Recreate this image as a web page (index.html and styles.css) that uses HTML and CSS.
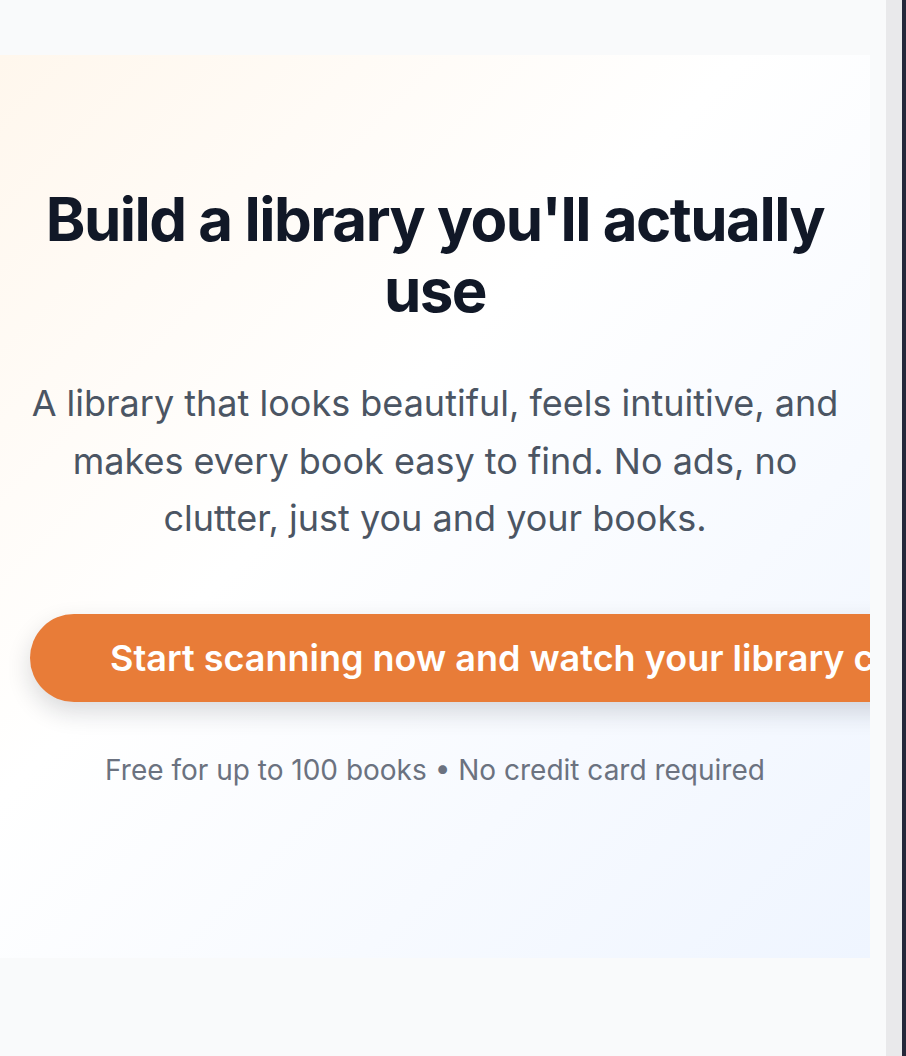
FILE: index.html
```html
<!DOCTYPE html>
<html lang="en">
<head>
<meta charset="utf-8">
<title>Build a library you'll actually use</title>
<link rel="stylesheet" href="styles.css">
</head>
<body>
<div class="window">
  <main class="page">
    <section class="hero">
      <h1 class="hero-title">Build a library you'll actually use</h1>
      <p class="hero-text">A library that looks beautiful, feels intuitive, and makes every book easy to find. No ads, no clutter, just you and your books.</p>
      <div class="hero-cta">
        <a class="cta-button" href="#">Start scanning now and watch your library come to life</a>
      </div>
      <p class="hero-note">Free for up to 100 books • No credit card required</p>
    </section>
  </main>
  <div class="scroll-track"></div>
  <div class="window-edge"></div>
</div>
</body>
</html>
```

FILE: styles.css
```css
* { box-sizing: border-box; }
html, body { margin: 0; padding: 0; height: 100%; }
body {
  font-family: Inter, "Noto Sans", sans-serif;
  background: #f9fafb;
  overflow: hidden;
}
.window {
  display: flex;
  height: 1056px;
}
.page {
  flex: 1;
  min-width: 0;
  background: #f9fafb;
  padding: 55px 16px 0 0;
}
.hero {
  height: 903px;
  overflow: hidden;
  background: linear-gradient(135deg, #fff7ed 0%, #ffffff 42%, #eff5ff 100%);
  padding: 129px 30px 0;
  text-align: center;
}
.hero-title {
  margin: 0;
  font-size: 60px;
  line-height: 71px;
  font-weight: 700;
  letter-spacing: -0.025em;
  color: #111827;
}
.hero-text {
  margin: 49px 0 0;
  font-size: 36px;
  line-height: 57.5px;
  color: #4b5563;
}
.hero-cta {
  margin-top: 66px;
  white-space: nowrap;
  text-align: left;
}
.cta-button {
  display: inline-block;
  height: 88px;
  line-height: 88px;
  padding: 0 80px;
  border-radius: 44px;
  background: #e87c38;
  color: #ffffff;
  font-size: 36px;
  font-weight: 600;
  text-decoration: none;
  box-shadow: 0 10px 24px rgba(17, 24, 39, 0.16);
}
.hero-note {
  margin: 47px 0 0;
  font-size: 28px;
  line-height: 42px;
  color: #6b7280;
}
.scroll-track {
  width: 16px;
  background: #e9e9eb;
}
.window-edge {
  width: 4px;
  background: #25283a;
}
```
